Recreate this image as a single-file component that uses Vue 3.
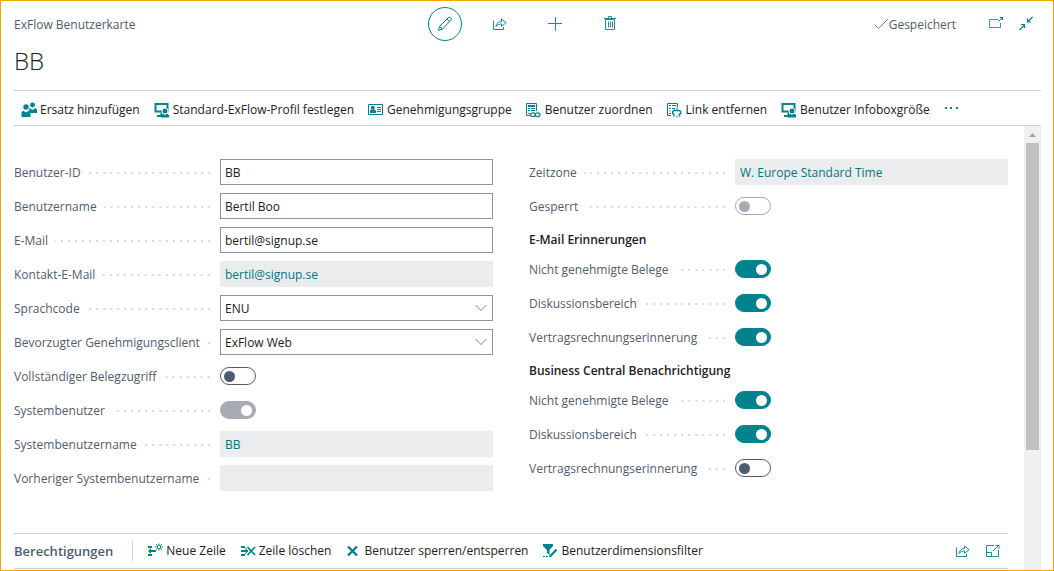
<script setup>
import { ref } from 'vue'

const actions = [
  { icon: 'people', label: 'Ersatz hinzufügen' },
  { icon: 'profile', label: 'Standard-ExFlow-Profil festlegen' },
  { icon: 'card', label: 'Genehmigungsgruppe' },
  { icon: 'link', label: 'Benutzer zuordnen' },
  { icon: 'unlink', label: 'Link entfernen' },
  { icon: 'profile', label: 'Benutzer Infoboxgröße' },
]

const leftFields = ref([
  { id: 'userId', type: 'text', label: 'Benutzer-ID', value: 'BB' },
  { id: 'userName', type: 'text', label: 'Benutzername', value: 'Bertil Boo' },
  { id: 'email', type: 'text', label: 'E-Mail', value: 'bertil@signup.se' },
  { id: 'contactEmail', type: 'readonly', label: 'Kontakt-E-Mail', value: 'bertil@signup.se' },
  { id: 'language', type: 'select', label: 'Sprachcode', value: 'ENU' },
  { id: 'client', type: 'select', label: 'Bevorzugter Genehmigungsclient', value: 'ExFlow Web' },
  { id: 'fullAccess', type: 'toggle', label: 'Vollständiger Belegzugriff', value: false },
  { id: 'systemUser', type: 'toggle', label: 'Systembenutzer', value: true, disabled: true },
  { id: 'systemUserName', type: 'readonly', label: 'Systembenutzername', value: 'BB' },
  { id: 'previousName', type: 'readonly', label: 'Vorheriger Systembenutzername', value: '' },
])

const rightFields = ref([
  { id: 'timeZone', type: 'readonly', label: 'Zeitzone', value: 'W. Europe Standard Time' },
  { id: 'blocked', type: 'toggle', label: 'Gesperrt', value: false, disabled: true },
  { id: 'mailHeading', type: 'heading', label: 'E-Mail Erinnerungen' },
  { id: 'mailDocs', type: 'toggle', label: 'Nicht genehmigte Belege', value: true },
  { id: 'mailTalk', type: 'toggle', label: 'Diskussionsbereich', value: true },
  { id: 'mailContract', type: 'toggle', label: 'Vertragsrechnungserinnerung', value: true },
  { id: 'bcHeading', type: 'heading', label: 'Business Central Benachrichtigung' },
  { id: 'bcDocs', type: 'toggle', label: 'Nicht genehmigte Belege', value: true },
  { id: 'bcTalk', type: 'toggle', label: 'Diskussionsbereich', value: true },
  { id: 'bcContract', type: 'toggle', label: 'Vertragsrechnungserinnerung', value: false },
])

const columns = [leftFields, rightFields]
</script>

<template>
  <div class="page">
    <svg class="defs" aria-hidden="true">
      <symbol id="share" viewBox="-1 -1 16 16">
        <path d="M.5 3.500v9h10V10M3 9.500C3.500 6.200 5.500 4.500 8.500 4.500V2l4.700 3.700L8.500 9.300V7C6 7 4.300 7.800 3 9.500Z" fill="none" stroke="currentColor" stroke-width=".9" />
      </symbol>
      <symbol id="people" viewBox="0 0 16 16">
        <g fill="currentColor">
          <circle cx="11.500" cy="3" r="2.400" />
          <path d="M8.500 6l3 2 3-2 1.500 1.500V11H9.500L8 8Z" />
          <circle cx="5" cy="5" r="2.700" />
          <path d="M2 8.500l3 2 3-2 1.500 2V15H.5v-4.500Z" />
        </g>
      </symbol>
      <symbol id="profile" viewBox="0 0 16 16">
        <path d="M1.500 2h12v7.500h-12Z" fill="none" stroke="currentColor" stroke-width="2" />
        <path d="M3 15h5v-4.500H6.500V13H3Z" fill="currentColor" />
        <circle cx="11" cy="9" r="3" fill="currentColor" stroke="#fff" />
        <path d="M7 15.500V13l2-1.500 2 1.500 2-1.500 2 1.500v2.500Z" fill="currentColor" />
      </symbol>
      <symbol id="card" viewBox="0 0 16 16">
        <path d="M.5 2.500h14v10H.5Z" fill="none" stroke="currentColor" />
        <circle cx="4.800" cy="5.800" r="2" fill="currentColor" />
        <path d="M2 11V8.500l1.500-1h3L8 8.500V11ZM9 5h4v1H9Zm0 2h4v1H9Zm0 2h4v1H9Z" fill="currentColor" />
      </symbol>
      <symbol id="link" viewBox="0 0 16 16">
        <path d="M5 13.500H.5v-12h10V9" fill="none" stroke="currentColor" />
        <path d="M2 3h7v2H2Zm0 3h2v1H2Zm3 0h4v1H5ZM2 8h2v1H2Zm3 0h4v1H5Zm-3 3h2v1H2Z" fill="currentColor" />
        <ellipse cx="7" cy="12.800" rx="2.400" ry="1.900" fill="#fff" stroke="currentColor" stroke-width="1.200" />
        <ellipse cx="11.600" cy="12.800" rx="2.400" ry="1.900" fill="none" stroke="currentColor" stroke-width="1.200" />
      </symbol>
      <symbol id="unlink" viewBox="0 0 16 16">
        <path d="M4 13.500H.5v-12h10V5" fill="none" stroke="currentColor" />
        <path d="M2 3h2v1H2Zm3 0h4v1H5ZM2 6h2v1H2Zm3 0h2v1H5ZM2 8.500h1v1H2ZM2 11h2v1H2Z" fill="currentColor" />
        <path d="M7.500 12.500c-2.500 0-2.500-4 0-4h4c3 0 3 4 0 4" fill="none" stroke="currentColor" stroke-width="1.400" />
        <path d="M7.500 6v1.500M10 5.500v2M6.500 15l1-2M10 15.500v-2M13 15l-1-2" fill="none" stroke="currentColor" />
      </symbol>
      <symbol id="new-row" viewBox="0 0 16 16">
        <path d="M1 3h4v2H1Zm0 8h4v2H1Zm3-4h5v2H4v2L1 8l3-3Z" fill="currentColor" />
        <path d="M10.500 2.500h3v3h-3ZM9 1l1 1M15 1l-1 1M9 7l1-1M15 7l-1-1M12 .5V2M12 6v2M8 4h2M14 4h2" fill="none" stroke="currentColor" stroke-width=".9" />
      </symbol>
      <symbol id="delete-row" viewBox="0 0 16 16">
        <path d="M1 3h4v2H1Zm0 8h4v2H1Zm0-4h6v2H1Z" fill="currentColor" />
        <path d="M7.500 4l7.500 8M15 4l-7.500 8" stroke="currentColor" stroke-width="1.800" />
        <path d="M5 5l3 3-3 3" fill="none" stroke="currentColor" />
      </symbol>
      <symbol id="cross" viewBox="0 0 16 16">
        <path d="M3 3.500l9 9M12 3.500l-9 9" stroke="currentColor" stroke-width="2.400" />
      </symbol>
      <symbol id="filter" viewBox="0 0 16 16">
        <path d="M1 1h10v2L7.500 7v5L5 10V7L1 3Z" fill="currentColor" />
        <path d="M8 13.500l6.500-7" stroke="currentColor" stroke-width="2.200" />
        <path d="M1 13.500h7" stroke="currentColor" stroke-dasharray="2 1" />
      </symbol>
    </svg>

    <header class="top">
      <span class="caption">ExFlow Benutzerkarte</span>
      <div class="tools">
        <button class="tool round" type="button" aria-label="Bearbeiten">
          <svg class="glyph" viewBox="0 0 16 16">
            <path d="M1.500 14.500l1-4L11 2c1-1 2-1 2.800-.3s.8 1.800-.2 2.800L5.500 13ZM2.500 10.500L5.500 13M10 3l3 3" fill="none" stroke="currentColor" />
          </svg>
        </button>
        <button class="tool" type="button" aria-label="Teilen"><svg class="glyph"><use href="#share" /></svg></button>
        <button class="tool" type="button" aria-label="Neu">
          <svg class="glyph" viewBox="0 0 16 16"><path d="M8.500 1v14M1 7.500h14" stroke="currentColor" stroke-width=".9" /></svg>
        </button>
        <button class="tool" type="button" aria-label="Löschen">
          <svg class="glyph" viewBox="0 0 16 16">
            <path d="M3.500 3.500h9v10h-9ZM2 2.500h12M6.500 2V.5h3V2M6.500 5.500v6M8.500 5.500v6M10.500 5.500v6" fill="none" stroke="currentColor" stroke-width=".9" />
          </svg>
        </button>
      </div>
      <div class="status">
        <svg class="glyph muted" viewBox="0 0 16 16"><path d="M1.500 8.500l4 4L15 3" fill="none" stroke="currentColor" /></svg>
        <span class="saved">Gespeichert</span>
        <button class="window first" type="button" aria-label="In neuem Fenster öffnen">
          <svg class="glyph" viewBox="0 0 16 16">
            <path d="M10 3.500H1.500v8h11V7" fill="none" stroke="currentColor" stroke-width=".8" />
            <path d="M10.500 5.500l4-4M12 1.500h2.500V4" fill="none" stroke="currentColor" />
          </svg>
        </button>
        <button class="window" type="button" aria-label="Verkleinern">
          <svg class="glyph" viewBox="0 0 16 16">
            <path d="M1.500 14l5-5M3 8.500h3.500V12M14.500 1l-5 5M9.500 2.500V6H13" fill="none" stroke="currentColor" stroke-width="1.200" />
          </svg>
        </button>
      </div>
    </header>

    <h1 class="title">BB</h1>

    <nav class="actions">
      <button v-for="action in actions" :key="action.label" class="action" type="button">
        <svg class="glyph"><use :href="'#' + action.icon" /></svg>{{ action.label }}
      </button>
      <button class="action more" type="button" aria-label="Weitere Optionen">
        <svg class="glyph" viewBox="0 0 16 16"><path d="M1 5h2v2H1Zm5 0h2v2H6Zm6 0h2v2h-2Z" fill="currentColor" /></svg>
      </button>
    </nav>

    <div class="body">
      <main class="content">
        <form class="form" @submit.prevent>
          <div v-for="(column, index) in columns" :key="index" class="column">
            <template v-for="field in column.value" :key="field.id">
              <h2 v-if="field.type === 'heading'" class="heading">{{ field.label }}</h2>
              <div v-else class="field">
                <label class="label" :for="field.id">{{ field.label }}</label>
                <input v-if="field.type === 'text'" :id="field.id" v-model="field.value" class="box" type="text" />
                <input v-else-if="field.type === 'readonly'" :id="field.id" class="box readonly" type="text" :value="field.value" readonly />
                <div v-else-if="field.type === 'select'" class="picker">
                  <select :id="field.id" v-model="field.value" class="box">
                    <option>{{ field.value }}</option>
                  </select>
                  <svg class="chevron" viewBox="0 0 12 8"><path d="M.5 1l5.500 5.500L11.500 1" fill="none" stroke="currentColor" /></svg>
                </div>
                <input v-else :id="field.id" v-model="field.value" class="toggle" type="checkbox" role="switch" :disabled="field.disabled" />
              </div>
            </template>
          </div>
        </form>

        <section class="lines">
          <h2 class="lines-title">Berechtigungen</h2>
          <button class="line-action" type="button"><svg class="glyph"><use href="#new-row" /></svg>Neue Zeile</button>
          <button class="line-action" type="button"><svg class="glyph"><use href="#delete-row" /></svg>Zeile löschen</button>
          <button class="line-action" type="button"><svg class="glyph"><use href="#cross" /></svg>Benutzer sperren/entsperren</button>
          <button class="line-action" type="button"><svg class="glyph"><use href="#filter" /></svg>Benutzerdimensionsfilter</button>
          <div class="line-tools">
            <button class="window" type="button" aria-label="Teilen"><svg class="glyph"><use href="#share" /></svg></button>
            <button class="window" type="button" aria-label="Erweitern">
              <svg class="glyph" viewBox="0 0 16 16">
                <path d="M9 2.500H1.500v11h12V7M1.500 9.500h5v4M8 8l6-6M10.500 2.500h3.500V6" fill="none" stroke="currentColor" stroke-width=".9" />
              </svg>
            </button>
          </div>
        </section>
      </main>
      <div class="scrollbar" aria-hidden="true">
        <svg class="arrow" viewBox="0 0 17 17"><path d="M5 11h7L8.500 7Z" fill="#a3a3a3" /></svg>
        <div class="track"><div class="thumb"></div></div>
      </div>
    </div>
  </div>
</template>

<style>
body {
  margin: 0;
}
</style>

<style scoped>
.page {
  box-sizing: border-box;
  min-height: 100vh;
  display: flex;
  flex-direction: column;
  padding: 0 12px 0 13px;
  border: 1px solid #f7a400;
  background: #fff;
  color: #212121;
  font: 12px/18px "Open Sans", "Noto Sans", sans-serif;
}
.defs {
  display: none;
}
button {
  display: flex;
  align-items: center;
  padding: 0;
  border: 0;
  background: none;
  color: inherit;
  font: inherit;
  white-space: nowrap;
  cursor: pointer;
}
.glyph {
  flex: none;
  width: 16px;
  height: 16px;
  color: #00838f;
}
.top {
  display: grid;
  grid-template-columns: 1fr auto 1fr;
  align-items: center;
  height: 46px;
  color: #505c6d;
}
.caption,
.saved {
  padding-top: 2px;
}
.tools {
  display: flex;
  gap: 21px;
}
.tool {
  justify-content: center;
  width: 34px;
  height: 34px;
}
.round {
  border: 1px solid #00838f;
  border-radius: 50%;
}
.status {
  display: flex;
  align-items: center;
  justify-content: flex-end;
  padding-right: 7px;
}
.muted {
  color: #7a8391;
}
.first {
  margin: 0 14px 0 32px;
}
.title {
  margin: 0;
  padding: 0 0 15px;
  font-size: 24px;
  line-height: 28px;
  font-weight: 300;
}
.actions {
  box-sizing: border-box;
  display: flex;
  gap: 14px;
  height: 36px;
  padding: 3px 0 0 7px;
  border: solid #d0d2d4;
  border-width: 1px 0;
}
.action {
  gap: 3px;
}
.body {
  flex: 1;
  display: flex;
}
.content {
  flex: 1;
  margin-right: 16px;
}
.form {
  display: grid;
  grid-template-columns: 1fr 1fr;
  gap: 36px;
  padding: 33px 0 42px;
}
.column {
  display: flex;
  flex-direction: column;
  gap: 8px;
}
.field {
  display: grid;
  grid-template-columns: 43fr 57fr;
  align-items: center;
  height: 26px;
}
.label {
  display: flex;
  align-items: center;
  gap: 7px;
  padding: 2px 10px 0 0;
  color: #505c6d;
  white-space: nowrap;
}
.label::after {
  content: "";
  flex: 1;
  height: 2px;
  background: linear-gradient(to right, transparent 5px, #d8d9dc 5px) right / 7px 2px;
}
.heading {
  margin: 0;
  padding: 4px 0 0;
  font-size: 12px;
  line-height: 17px;
  font-weight: 600;
}
.box {
  box-sizing: border-box;
  width: 100%;
  height: 26px;
  margin: 0;
  padding: 1px 4px 0;
  border: 1px solid #8b93a0;
  border-radius: 0;
  background: #fff;
  color: #212121;
  font: inherit;
  appearance: none;
}
.readonly {
  border-color: #ebecee;
  background: #ebecee;
  color: #007680;
}
.picker {
  position: relative;
}
.chevron {
  position: absolute;
  top: 9px;
  right: 6px;
  width: 12px;
  height: 8px;
  color: #7a8391;
  pointer-events: none;
}
.toggle {
  box-sizing: border-box;
  display: flex;
  align-items: center;
  width: 36px;
  height: 18px;
  margin: 0;
  padding: 0 3px;
  border: 1px solid #505c6d;
  border-radius: 9px;
  background: #fff;
  color: #505c6d;
  appearance: none;
}
.toggle::before {
  content: "";
  width: 11px;
  height: 11px;
  border-radius: 50%;
  background: currentColor;
}
.toggle:disabled {
  border-color: #a6abb5;
  color: #a6abb5;
}
.toggle:checked {
  justify-content: flex-end;
  border-color: #00838f;
  background: #00838f;
  color: #fff;
}
.toggle:checked:disabled {
  border-color: #a6abb5;
  background: #a6abb5;
}
.lines {
  display: flex;
  align-items: center;
  gap: 14px;
  height: 34px;
  border: solid #d0d2d4;
  border-width: 1px 0;
}
.lines-title {
  margin: 0;
  padding: 0 19px 0 0;
  border-right: 1px solid #d0d2d4;
  color: #505c6d;
  font-size: 13px;
  line-height: 20px;
  font-weight: 600;
}
.line-action {
  gap: 3px;
}
.line-tools {
  display: flex;
  gap: 14px;
  margin-left: auto;
  padding-right: 7px;
}
.scrollbar {
  display: flex;
  flex-direction: column;
  width: 17px;
  background: #f0f0f0;
}
.arrow {
  width: 17px;
  height: 17px;
}
.track {
  flex: 1;
  display: grid;
  grid-template-rows: 72fr 28fr;
  padding: 0 2px;
}
.thumb {
  background: #c1c1c1;
}
</style>
